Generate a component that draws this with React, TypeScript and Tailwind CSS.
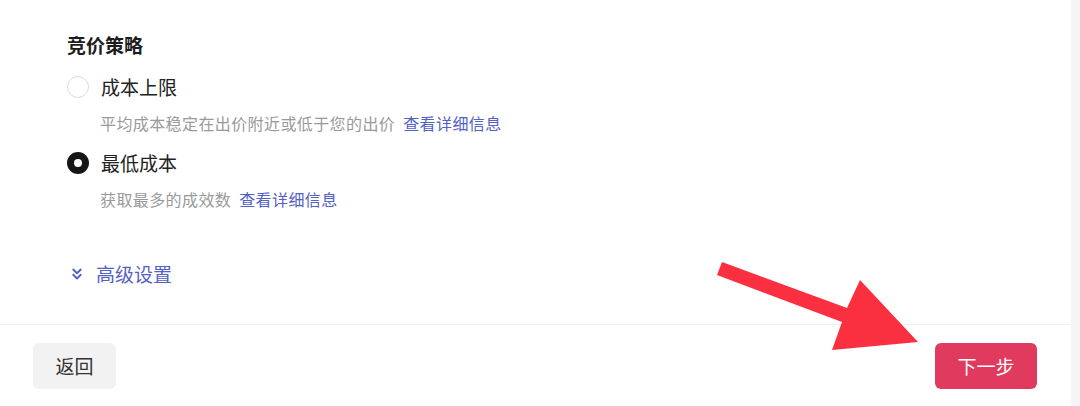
import React from 'react';
import { ChevronsDown } from 'lucide-react';

function Radio({ checked }: { checked: boolean }) {
  if (checked) {
    return (
      <span className="flex h-[22px] w-[22px] items-center justify-center rounded-full bg-[#161616]">
        <span className="h-[8px] w-[8px] rounded-full bg-white" />
      </span>
    );
  }
  return <span className="h-[22px] w-[22px] rounded-full border border-[#dcdcdc] bg-white" />;
}

function Option({ label, desc, checked }: { label: string; desc: string; checked: boolean }) {
  return (
    <div className="flex flex-col">
      <div className="flex h-[28px] items-center gap-[12px]">
        <Radio checked={checked} />
        <span className="text-[19px] text-[#222]">{label}</span>
      </div>
      <div className="mt-[11px] flex h-[22px] items-center pl-[33px] text-[16px] tracking-[0.4px] text-[#9a9a9a]">
        {desc}
        <a className="ml-[8px] text-[#5461c4]">查看详细信息</a>
      </div>
    </div>
  );
}

export default function App() {
  return (
    <div
      className="relative flex h-[406px] w-[1080px] overflow-hidden bg-white"
      style={{ fontFamily: '"Noto Sans CJK SC", "Noto Sans", sans-serif' }}
    >
      <div className="flex flex-1 flex-col">
        <div className="flex flex-col pl-[67px] pt-[31px]">
          <div className="flex h-[28px] items-center text-[19px] font-bold text-[#1d1d1d]">竞价策略</div>
          <div className="mt-[14px] flex flex-col gap-[15px]">
            <Option label="成本上限" desc="平均成本稳定在出价附近或低于您的出价" checked={false} />
            <Option label="最低成本" desc="获取最多的成效数" checked={true} />
          </div>
          <div className="mt-[50px] flex h-[28px] items-center gap-[10px] text-[#5461c4]">
            <ChevronsDown size={18} strokeWidth={2.5} className="ml-[1px]" />
            <span className="text-[19px]">高级设置</span>
          </div>
        </div>
        <div className="mt-[36px] h-px bg-[#f0f0f0]" />
        <div className="flex items-center justify-between pl-[33px] pr-[34px] pt-[18px]">
          <button className="flex h-[46px] w-[83px] items-center justify-center rounded-[6px] bg-[#f2f2f2] text-[19px] text-[#333]">
            返回
          </button>
          <button className="flex h-[46px] w-[102px] items-center justify-center rounded-[6px] bg-[#e03a5e] text-[19px] text-white">
            下一步
          </button>
        </div>
      </div>
      <div className="w-[9px] bg-[#f5f5f5]" />
      <svg className="pointer-events-none absolute left-0 top-0" width="1080" height="406" viewBox="0 0 1080 406">
        <polygon
          points="722,262 847,308 860,280 918,342 832,350 842,322 717,275"
          fill="#fa2f3f"
        />
      </svg>
    </div>
  );
}
